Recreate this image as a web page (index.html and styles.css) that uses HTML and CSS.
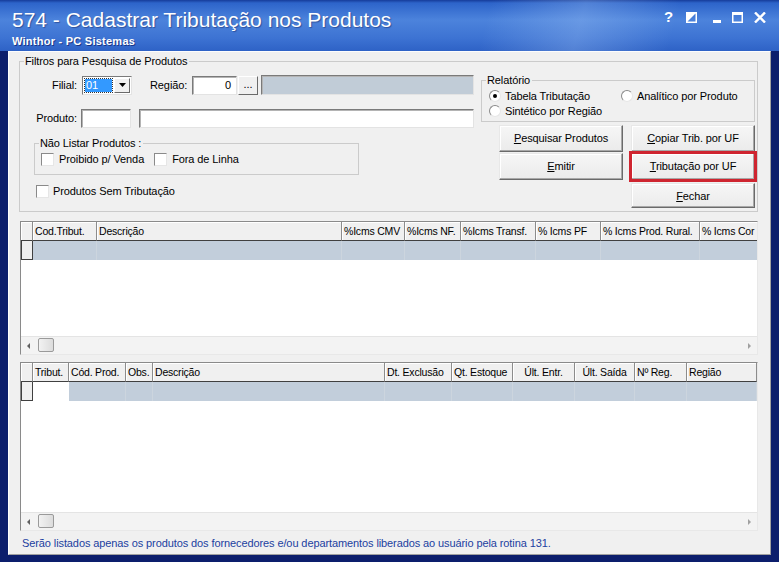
FILE: index.html
```html
<!DOCTYPE html>
<html lang="pt-BR">
<head>
<meta charset="utf-8">
<title>574 - Cadastrar Tributação nos Produtos</title>
<link rel="stylesheet" href="styles.css">
</head>
<body>
<div class="window">

<div class="titlebar">
  <div class="caption">
    <div class="title">574 - Cadastrar Tributação nos Produtos</div>
    <div class="subtitle">Winthor - PC Sistemas</div>
  </div>
  <div class="controls">
    <span class="ctl-help">?</span>
    <svg class="ctl ctl-half" width="11" height="11" viewBox="0 0 11 11"><rect x="0.75" y="0.75" width="9.5" height="9.5" fill="none" stroke="#fff" stroke-width="1.5"/><polygon points="0,0 11,0 0,11" fill="#fff"/></svg>
    <svg class="ctl ctl-min" width="8" height="11" viewBox="0 0 8 11"><rect x="0" y="8" width="8" height="3" fill="#fff"/></svg>
    <svg class="ctl ctl-max" width="11" height="11" viewBox="0 0 11 11"><rect x="0.75" y="0.75" width="9.5" height="9.5" fill="none" stroke="#fff" stroke-width="1.5"/><rect x="0" y="0" width="11" height="3" fill="#fff"/></svg>
    <svg class="ctl ctl-close" width="12" height="11" viewBox="0 0 12 11"><path d="M1 0.5 L11 10.5 M11 0.5 L1 10.5" stroke="#fff" stroke-width="2.4"/></svg>
  </div>
</div>

<div class="client">

  <fieldset class="group filters">
    <legend>Filtros para Pesquisa de Produtos</legend>
    <div class="filters-body">

      <div class="filters-left">
        <div class="row row-filial">
          <span class="lbl lbl-filial">Filial:</span>
          <div class="combo"><span class="combo-val">01</span><span class="combo-btn"><svg width="7" height="4" viewBox="0 0 7 4"><polygon points="0,0 7,0 3.5,4" fill="#000"/></svg></span></div>
          <span class="lbl lbl-regiao">Região:</span>
          <div class="edit edit-regiao">0</div>
          <div class="dots">...</div>
          <div class="edit edit-readonly"></div>
        </div>
        <div class="row row-produto">
          <span class="lbl lbl-filial">Produto:</span>
          <div class="edit edit-cod"></div>
          <div class="edit edit-desc"></div>
        </div>
        <fieldset class="group naolistar">
          <legend>Não Listar Produtos :</legend>
          <div class="checks">
            <span class="check"><span class="box"></span>Proibido p/ Venda</span>
            <span class="check"><span class="box"></span>Fora de Linha</span>
          </div>
        </fieldset>
        <div class="check sem-trib"><span class="box"></span>Produtos Sem Tributação</div>
      </div>

      <div class="filters-right">
        <fieldset class="group relatorio">
          <legend>Relatório</legend>
          <div class="radios">
            <span class="radio"><span class="dot on"></span>Tabela Tributação</span>
            <span class="radio"><span class="dot"></span>Analítico por Produto</span>
            <span class="radio"><span class="dot"></span>Sintético por Região</span>
          </div>
        </fieldset>
        <div class="buttons">
          <div class="btn"><u>P</u>esquisar Produtos</div>
          <div class="btn"><u>C</u>opiar Trib. por UF</div>
          <div class="btn"><u>E</u>mitir</div>
          <div class="btn marked"><u>T</u>ributação por UF</div>
          <div class="btn btn-fechar"><u>F</u>echar</div>
        </div>
      </div>

    </div>
  </fieldset>

  <div class="grid grid-trib">
    <div class="grid-head">
      <div class="hc ind"></div>
      <div class="hc">Cod.Tribut.</div>
      <div class="hc">Descrição</div>
      <div class="hc">%Icms CMV</div>
      <div class="hc">%Icms NF.</div>
      <div class="hc">%Icms Transf.</div>
      <div class="hc">% Icms PF</div>
      <div class="hc">% Icms Prod. Rural.</div>
      <div class="hc">% Icms Cor</div>
    </div>
    <div class="grid-row">
      <div class="rc ind"></div>
      <div class="rc"></div><div class="rc"></div><div class="rc"></div><div class="rc"></div>
      <div class="rc"></div><div class="rc"></div><div class="rc"></div><div class="rc"></div>
    </div>
    <div class="grid-body"></div>
    <div class="hscroll">
      <span class="arrow-l"></span>
      <span class="thumb"></span>
      <span class="arrow-r"></span>
    </div>
  </div>

  <div class="grid grid-prod">
    <div class="grid-head">
      <div class="hc ind"></div>
      <div class="hc">Tribut.</div>
      <div class="hc">Cód. Prod.</div>
      <div class="hc">Obs.</div>
      <div class="hc">Descrição</div>
      <div class="hc">Dt. Exclusão</div>
      <div class="hc">Qt. Estoque</div>
      <div class="hc center">Últ. Entr.</div>
      <div class="hc center">Últ. Saída</div>
      <div class="hc">Nº Reg.</div>
      <div class="hc">Região</div>
    </div>
    <div class="grid-row">
      <div class="rc ind"></div>
      <div class="rc edit-cell"></div>
      <div class="rc"></div><div class="rc"></div><div class="rc"></div><div class="rc"></div>
      <div class="rc"></div><div class="rc"></div><div class="rc"></div><div class="rc"></div><div class="rc"></div>
    </div>
    <div class="grid-body"></div>
    <div class="hscroll">
      <span class="arrow-l"></span>
      <span class="thumb"></span>
      <span class="arrow-r"></span>
    </div>
  </div>

  <div class="footer">Serão listados apenas os produtos dos fornecedores e/ou departamentos liberados ao usuário pela rotina 131.</div>

</div>
</div>
</body>
</html>
```

FILE: styles.css
```css
/* Winthor - rotina 574 */

body
{ margin: 0;
  font-family: "Liberation Sans", Arial, sans-serif;
  font-size: 11px;
  letter-spacing: -0.1px;
  color: #000;
}

.window
{ width: 779px;
  height: 562px;
  background: #0c1e6c;
  display: flex;
  flex-direction: column;
  overflow: hidden;
}

/* Title bar */

.titlebar
{ flex: none;
  height: 51px;
  display: flex;
  justify-content: space-between;
  background:
    linear-gradient(105deg, rgba(255,255,255,0) 62%, rgba(190,220,255,.25) 74%, rgba(255,255,255,0) 86%),
    linear-gradient(180deg, #163c9a 0, #2d64ca 3px, #4c83dc 20px, #3d73d3 38px, #2e62c6 51px);
}

.caption
{ padding: 8px 0 0 12px;
  color: #fff;
  letter-spacing: 0;
}

.title
{ font-size: 21px;
  line-height: 24px;
  text-shadow: 1px 1px 1px rgba(0,0,50,.35);
}

.subtitle
{ margin-top: 3px;
  font-size: 11px;
  line-height: 13px;
  font-weight: bold;
  letter-spacing: 0.25px;
  text-shadow: 1px 1px 0 rgba(0,0,60,.5);
}

.controls
{ display: flex;
  align-items: flex-start;
  padding: 12px 13px 0 0;
}

.ctl-help
{ width: 9px;
  margin-top: -3px;
  color: #fff;
  font-size: 15px;
  font-weight: bold;
  line-height: 16px;
}

.ctl { display: block; }
.ctl-half { margin-left: 13px; }
.ctl-min { margin-left: 16px; }
.ctl-max { margin-left: 11px; }
.ctl-close { margin-left: 11px; }

/* Client area */

.client
{ flex: none;
  box-sizing: border-box;
  width: 763px;
  height: 504px;
  margin-left: 8px;
  background: #f0f0f0;
  border: 1px solid;
  border-color: #fdfdfd #a0a0a0 #a0a0a0 #fdfdfd;
}

fieldset.group
{ margin: 0;
  padding: 0;
  min-width: 0;
  box-sizing: border-box;
  border: 1px solid #cbcbcb;
}

fieldset.group legend
{ margin-left: 4px;
  padding: 0 2px 0 1px;
  line-height: 13px;
}

fieldset.filters
{ width: 739px;
  height: 157px;
  margin: 3px 0 0 10px;
}

.filters-body
{ display: flex;
}

.filters-left
{ width: 455px;
  padding-top: 7px;
}

.filters-right
{ width: 274px;
  margin-left: 6px;
  padding-top: 6px;
}

.row
{ display: flex;
  align-items: center;
  height: 20px;
}

.row-produto { margin-top: 13px; }

.lbl-filial
{ width: 57px;
  text-align: right;
}

.lbl-regiao
{ width: 36px;
  margin-left: 18px;
  text-align: right;
}

.edit
{ box-sizing: border-box;
  height: 19px;
  background: #fff;
  border: 1px solid;
  border-color: #7a7a7a #e3e3e3 #e3e3e3 #7a7a7a;
  box-shadow: inset 1px 1px 0 #b4b4b4;
  line-height: 17px;
}

.edit-regiao
{ width: 45px;
  margin-left: 6px;
  padding-right: 5px;
  text-align: right;
}

.edit-readonly
{ width: 213px;
  height: 20px;
  margin-left: 3px;
  background: #c1ccd7;
}

.edit-cod
{ width: 50px;
  margin-left: 4px;
}

.edit-desc
{ width: 335px;
  margin-left: 8px;
}

.combo
{ box-sizing: border-box;
  display: flex;
  width: 50px;
  height: 19px;
  margin-left: 5px;
  padding: 2px;
  background: #fff;
  border: 1px solid;
  border-color: #7a7a7a #e3e3e3 #e3e3e3 #7a7a7a;
}

.combo-val
{ flex: 1;
  background: #3399ff;
  color: #fff;
  line-height: 13px;
  padding-left: 1px;
  outline: 1px dotted #333;
}

.combo-btn
{ box-sizing: border-box;
  width: 16px;
  margin: -1px -1px -1px 2px;
  display: flex;
  align-items: center;
  justify-content: center;
  background: #f0f0f0;
  border: 1px solid;
  border-color: #fff #6a6a6a #6a6a6a #fff;
}

.dots
{ box-sizing: border-box;
  width: 20px;
  height: 19px;
  margin-left: 1px;
  text-align: center;
  line-height: 15px;
  background: #f0f0f0;
  border: 1px solid;
  border-color: #fff #6a6a6a #6a6a6a #fff;
}

/* Check boxes and radios */

.check, .radio
{ display: flex;
  align-items: center;
  line-height: 14px;
}

.box
{ box-sizing: border-box;
  width: 13px;
  height: 13px;
  margin-right: 5px;
  background: #fff;
  border: 1px solid;
  border-color: #8a8a8a #e6e6e6 #e6e6e6 #8a8a8a;
}

fieldset.naolistar
{ width: 325px;
  height: 38px;
  margin: 9px 0 0 14px;
}

.checks
{ display: flex;
  gap: 10px;
  padding: 2px 0 0 6px;
}

.sem-trib
{ margin: 9px 0 0 16px;
}

.sem-trib .box { margin-right: 4px; }

fieldset.relatorio
{ width: 274px;
  height: 48px;
}

.radios
{ display: grid;
  grid-template-columns: 132px auto;
  padding: 1px 0 0 7px;
}

.radio { height: 15px; }

.dot
{ box-sizing: border-box;
  position: relative;
  width: 12px;
  height: 12px;
  margin-right: 4px;
  background: #fff;
  border: 1px solid;
  border-color: #8a8a8a #e6e6e6 #e6e6e6 #8a8a8a;
  border-radius: 50%;
}

.dot.on::after
{ content: "";
  position: absolute;
  left: 3px;
  top: 3px;
  width: 4px;
  height: 4px;
  border-radius: 50%;
  background: #000;
}

/* Buttons */

.buttons
{ display: grid;
  grid-template-columns: 124px 124px;
  grid-auto-rows: 27px;
  column-gap: 8px;
  row-gap: 1px;
  margin: 3px 0 0 18px;
}

.btn
{ box-sizing: border-box;
  text-align: center;
  line-height: 25px;
  background: linear-gradient(#f6f6f6, #ebebeb);
  border: 1px solid;
  border-color: #e8e8e8 #6a6a6a #6a6a6a #e8e8e8;
  box-shadow: inset -1px -1px 0 #a8a8a8, inset 1px 1px 0 #fff;
}

.btn-fechar
{ grid-column: 2;
  margin-top: 2px;
}

.btn.marked
{ outline: 3px solid #cf2530;
  outline-offset: -1px;
}

/* Grids */

.grid
{ box-sizing: border-box;
  width: 738px;
  margin-left: 11px;
  display: flex;
  flex-direction: column;
  overflow: hidden;
  background: #fff;
  border: 1px solid;
  border-color: #8a8a8a #e8e8e8 #e8e8e8 #8a8a8a;
}

.grid-trib
{ height: 134px;
  margin-top: 9px;
}

.grid-prod
{ height: 169px;
  margin-top: 7px;
}

.grid-head, .grid-row
{ display: grid;
  flex: none;
}

.grid-trib .grid-head, .grid-trib .grid-row
{ grid-template-columns: 12px 64px 245px 63px 56px 75px 65px 99px 100px;
}

.grid-prod .grid-head, .grid-prod .grid-row
{ grid-template-columns: 12px 36px 57px 27px 232px 67px 61px 62px 60px 52px 70px;
}

.hc
{ box-sizing: border-box;
  height: 19px;
  padding-left: 2px;
  font-size: 10.5px;
  letter-spacing: -0.2px;
  line-height: 18px;
  white-space: nowrap;
  overflow: hidden;
  background: #f0f0f0;
  border-right: 1px solid #8c8c8c;
  border-bottom: 1px solid #404040;
  box-shadow: inset 1px 1px 0 #fff;
}

.hc.center
{ padding-left: 0;
  text-align: center;
}

.rc
{ box-sizing: border-box;
  height: 19px;
  background: #c2cedb;
  border-right: 1px solid #ccd5de;
}

.rc.ind
{ background: #f0f0f0;
  border-left: 1px solid #404040;
  border-right: 1px solid #404040;
  border-bottom: 1px solid #404040;
}

.rc.edit-cell
{ background: #fff;
  border-right: none;
}

.grid-body
{ flex: 1;
}

.hscroll
{ flex: none;
  position: relative;
  height: 17px;
  background: #f3f3f3;
  border-top: 1px solid #e4e4e4;
}

.arrow-l, .arrow-r
{ position: absolute;
  top: 6px;
  width: 0;
  height: 0;
  border-top: 3px solid transparent;
  border-bottom: 3px solid transparent;
}

.arrow-l
{ left: 6px;
  border-right: 3px solid #606060;
}

.arrow-r
{ right: 6px;
  border-left: 3px solid #a0a0a0;
}

.thumb
{ position: absolute;
  left: 17px;
  top: 1px;
  box-sizing: border-box;
  width: 16px;
  height: 14px;
  border: 1px solid #9a9a9a;
  border-radius: 2px;
  background: linear-gradient(90deg, #f2f2f2, #dcdcdc);
}

.footer
{ margin-top: 6px;
  padding-left: 13px;
  line-height: 13px;
  color: #2140a0;
  white-space: nowrap;
}
```
